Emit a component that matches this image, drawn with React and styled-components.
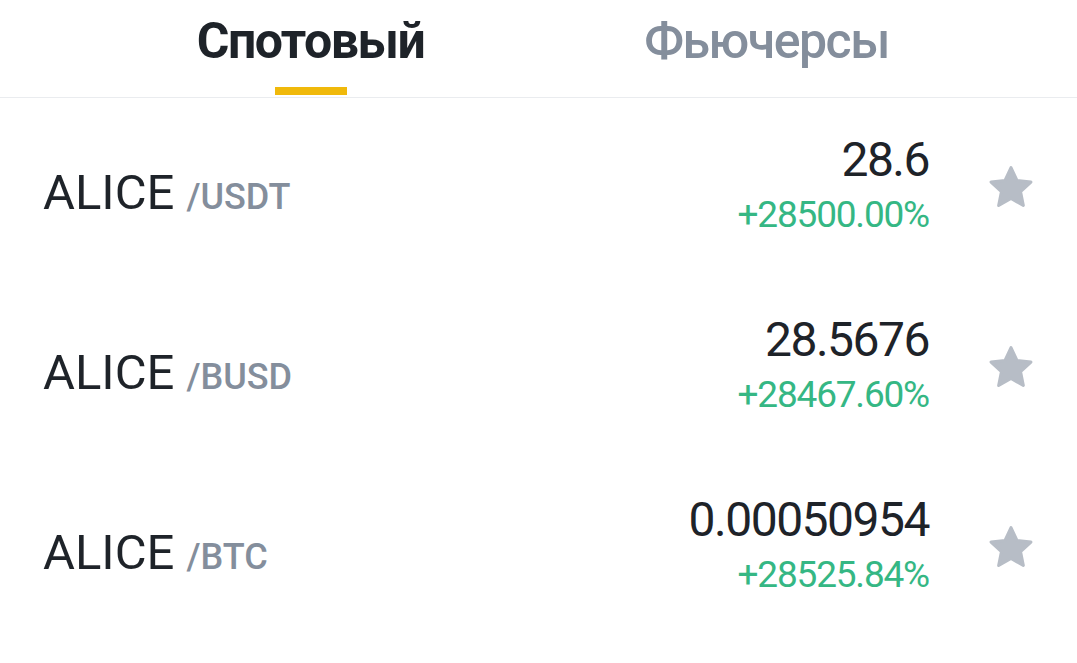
import React from 'react';
import styled, { createGlobalStyle } from 'styled-components';

const GlobalStyle = createGlobalStyle`
  html, body {
    margin: 0;
    padding: 0;
    background: #ffffff;
  }
  body {
    font-family: Roboto, "Noto Sans", Arial, sans-serif;
    color: #1e2329;
  }
`;

const Page = styled.div`
  width: 1077px;
  height: 663px;
  overflow: hidden;
  background: #fff;
`;

const TabBar = styled.nav`
  display: grid;
  grid-template-columns: 456px 456px;
  justify-content: center;
  height: 97px;
  border-bottom: 1px solid #eaecef;
`;

const Tab = styled.div`
  display: flex;
  flex-direction: column;
  align-items: center;
  padding-top: 12px;
  font-size: 50px;
  font-weight: ${(p) => (p.$active ? 700 : 500)};
  letter-spacing: -1.5px;
  color: ${(p) => (p.$active ? '#1e2329' : '#848e9c')};
`;

const Underline = styled.span`
  display: block;
  width: 72px;
  height: 8px;
  margin-top: 17px;
  background: #f0b90b;
`;

const Row = styled.div`
  display: flex;
  align-items: center;
  height: 180px;
  padding: 0 40px 0 43px;
`;

const Pair = styled.div`
  flex: 1;
  display: flex;
  align-items: baseline;
  gap: 12px;
  padding-top: 8px;
`;

const Base = styled.span`
  font-size: 49px;
  color: #1e2329;
`;

const Quote = styled.span`
  font-size: 36px;
  font-weight: 500;
  color: #848e9c;
`;

const Prices = styled.div`
  display: flex;
  flex-direction: column;
  align-items: flex-end;
  margin-top: -4px;
`;

const Price = styled.span`
  font-size: 48px;
  line-height: 58px;
  letter-spacing: -1.5px;
  color: #1e2329;
`;

const Change = styled.span`
  font-size: 37px;
  line-height: 52px;
  letter-spacing: -1.2px;
  color: #35b784;
`;

const StarButton = styled.div`
  width: 52px;
  height: 52px;
  margin-left: 56px;
  display: flex;
  align-items: center;
  justify-content: center;
`;

function Star() {
  return (
    <svg width="52" height="52" viewBox="0 0 24 24">
      <path
        d="M12 2.6l2.75 5.9 6.45.75-4.8 4.42 1.3 6.38L12 16.8l-5.7 3.25 1.3-6.38-4.8-4.42 6.45-.75z"
        fill="#b7bdc6"
        stroke="#b7bdc6"
        strokeWidth="1.4"
        strokeLinejoin="round"
      />
    </svg>
  );
}

const markets = [
  { base: 'ALICE', quote: '/USDT', price: '28.6', change: '+28500.00%' },
  { base: 'ALICE', quote: '/BUSD', price: '28.5676', change: '+28467.60%' },
  { base: 'ALICE', quote: '/BTC', price: '0.00050954', change: '+28525.84%' },
];

export default function App() {
  return (
    <Page>
      <GlobalStyle />
      <TabBar>
        <Tab $active>
          Спотовый
          <Underline />
        </Tab>
        <Tab>Фьючерсы</Tab>
      </TabBar>
      {markets.map((m) => (
        <Row key={m.quote}>
          <Pair>
            <Base>{m.base}</Base>
            <Quote>{m.quote}</Quote>
          </Pair>
          <Prices>
            <Price>{m.price}</Price>
            <Change>{m.change}</Change>
          </Prices>
          <StarButton>
            <Star />
          </StarButton>
        </Row>
      ))}
    </Page>
  );
}
